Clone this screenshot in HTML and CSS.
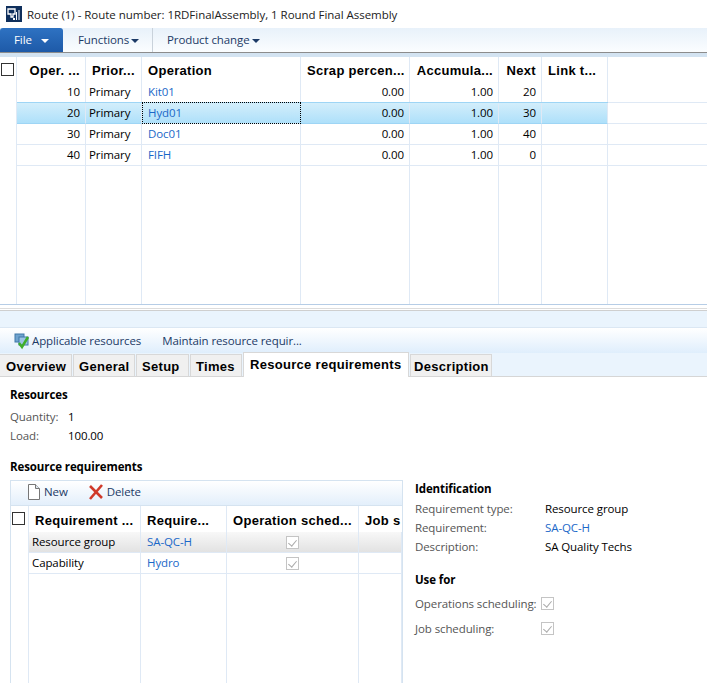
FILE: index.html
```html
<!DOCTYPE html>
<html lang="en">

<head>
    <meta charset="UTF-8">
    <title>Route (1)</title>
    <link rel="stylesheet" href="styles.css">
</head>

<body>
    <div class="titlebar">
        <svg class="app-icon" width="16" height="16" viewBox="0 0 16 16">
            <rect width="16" height="16" fill="#0f2f5c" />
            <path d="M2 3h7v5H7v3H5V8H2z" fill="none" stroke="#fff" stroke-width="1.3" />
            <path d="M10 6h1v8h-1zM12.500 4h1v10h-1zM7 12h2v2H7z" fill="#fff" />
        </svg>
        <span>Route (1) - Route number: 1RDFinalAssembly, 1 Round Final Assembly</span>
    </div>

    <div class="ribbon">
        <div class="file-tab">File <i class="caret white"></i></div>
        <div class="menu first">Functions<i class="caret"></i></div>
        <div class="menu">Product change<i class="caret"></i></div>
    </div>
    <div class="ribbon-edge"></div>

    <div class="route-grid">
        <div class="route-row head">
            <div class="cell"><span class="check"></span></div>
            <div class="cell num">Oper. ...</div>
            <div class="cell">Prior...</div>
            <div class="cell">Operation</div>
            <div class="cell num">Scrap percen...</div>
            <div class="cell num">Accumula...</div>
            <div class="cell num">Next</div>
            <div class="cell">Link t...</div>
        </div>
        <div class="route-row line">
            <div class="cell"></div>
            <div class="cell num">10</div>
            <div class="cell prio">Primary</div>
            <div class="cell link">Kit01</div>
            <div class="cell num">0.00</div>
            <div class="cell num">1.00</div>
            <div class="cell num">20</div>
            <div class="cell"></div>
        </div>
        <div class="route-row line selected">
            <div class="cell"></div>
            <div class="cell num">20</div>
            <div class="cell prio">Primary</div>
            <div class="cell link focus">Hyd01</div>
            <div class="cell num">0.00</div>
            <div class="cell num">1.00</div>
            <div class="cell num">30</div>
            <div class="cell"></div>
        </div>
        <div class="route-row line">
            <div class="cell"></div>
            <div class="cell num">30</div>
            <div class="cell prio">Primary</div>
            <div class="cell link">Doc01</div>
            <div class="cell num">0.00</div>
            <div class="cell num">1.00</div>
            <div class="cell num">40</div>
            <div class="cell"></div>
        </div>
        <div class="route-row line">
            <div class="cell"></div>
            <div class="cell num">40</div>
            <div class="cell prio">Primary</div>
            <div class="cell link">FIFH</div>
            <div class="cell num">0.00</div>
            <div class="cell num">1.00</div>
            <div class="cell num">0</div>
            <div class="cell"></div>
        </div>
        <div class="route-row filler">
            <div class="cell"></div>
            <div class="cell"></div>
            <div class="cell"></div>
            <div class="cell"></div>
            <div class="cell"></div>
            <div class="cell"></div>
            <div class="cell"></div>
            <div class="cell"></div>
        </div>
    </div>

    <div class="splitter"></div>
    <div class="pale-band"></div>

    <div class="action-bar">
        <svg width="18" height="18" viewBox="0 0 18 18">
            <rect x="1" y="2" width="9" height="8" fill="#6fa3cf" stroke="#3f78a8" />
            <rect x="5" y="5" width="9" height="8" fill="#9cc4e4" stroke="#3f78a8" />
            <path d="M5 11l3 4 6-10" fill="none" stroke="#3fae2a" stroke-width="2.500" />
        </svg>
        <span class="action first">Applicable resources</span>
        <span class="action">Maintain resource requir...</span>
    </div>

    <div class="tabs">
        <div class="tab">Overview</div>
        <div class="tab">General</div>
        <div class="tab">Setup</div>
        <div class="tab">Times</div>
        <div class="tab active">Resource requirements</div>
        <div class="tab">Description</div>
    </div>

    <div class="page">
        <h4 class="res-title">Resources</h4>
        <div class="field qty"><span class="label">Quantity:</span><span>1</span></div>
        <div class="field qty"><span class="label">Load:</span><span>100.00</span></div>

        <div class="columns">
            <div class="left">
                <h4>Resource requirements</h4>
                <div class="req-box">
                    <div class="req-toolbar">
                        <svg width="14" height="16" viewBox="0 0 14 16">
                            <path d="M1.500 .5h7l4 4v11h-11z" fill="#fff" stroke="#777" />
                            <path d="M8.500 .5v4h4" fill="#dde6ee" stroke="#777" />
                        </svg>
                        <span class="tool">New</span>
                        <svg class="del" width="16" height="16" viewBox="0 0 16 16">
                            <path d="M2 2l12 12M14 1L2 15" fill="none" stroke="#d03a2a" stroke-width="2.600" />
                        </svg>
                        <span class="tool">Delete</span>
                    </div>
                    <div class="req-row head">
                        <div class="cell"><span class="check"></span></div>
                        <div class="cell">Requirement ...</div>
                        <div class="cell">Require...</div>
                        <div class="cell">Operation sched...</div>
                        <div class="cell clip">Job s</div>
                    </div>
                    <div class="req-row line current">
                        <div class="cell"></div>
                        <div class="cell">Resource group</div>
                        <div class="cell link">SA-QC-H</div>
                        <div class="cell mid"><span class="tick"></span></div>
                        <div class="cell"></div>
                    </div>
                    <div class="req-row line">
                        <div class="cell"></div>
                        <div class="cell">Capability</div>
                        <div class="cell link">Hydro</div>
                        <div class="cell mid"><span class="tick"></span></div>
                        <div class="cell"></div>
                    </div>
                    <div class="req-row filler">
                        <div class="cell"></div>
                        <div class="cell"></div>
                        <div class="cell"></div>
                        <div class="cell"></div>
                        <div class="cell"></div>
                    </div>
                </div>
            </div>
            <div class="right">
                <h4>Identification</h4>
                <div class="field info"><span class="label">Requirement type:</span><span>Resource group</span></div>
                <div class="field info"><span class="label">Requirement:</span><span class="link">SA-QC-H</span></div>
                <div class="field info"><span class="label">Description:</span><span>SA Quality Techs</span></div>
                <h4 class="use-for">Use for</h4>
                <div class="field use"><span class="label">Operations scheduling:</span><span class="tick"></span></div>
                <div class="field use"><span class="label">Job scheduling:</span><span class="tick"></span></div>
            </div>
        </div>
    </div>
</body>

</html>
```

FILE: styles.css
```css
* {
    margin: 0;
    padding: 0;
    box-sizing: border-box;
}

body {
    width: 707px;
    height: 683px;
    overflow: hidden;
    background-color: #fff;
    color: #000;
    font-family: "Open Sans", "Liberation Sans", sans-serif;
    font-size: 11.5px;
    letter-spacing: -0.1px;
}

.titlebar {
    height: 28px;
    display: flex;
    align-items: center;
    gap: 5px;
    padding: 0 0 0 6px;
    color: #222;
    letter-spacing: -0.03px;
}

.ribbon {
    height: 25px;
    display: flex;
    align-items: center;
    background: linear-gradient(#e8f1fa, #fbfdff);
    border-bottom: 1px solid #8c8c8c;
    color: #1c3a66;
}

.file-tab {
    width: 63px;
    height: 24px;
    padding: 4px 0 0 14px;
    color: #fff;
    border-radius: 3px 3px 0 0;
    background: linear-gradient(#2e72c2, #1e5aa8);
}

.caret {
    display: inline-block;
    vertical-align: middle;
    margin-left: 2px;
    border-top: 4px solid #1c3a66;
    border-left: 4px solid transparent;
    border-right: 4px solid transparent;
}

.caret.white {
    margin-left: 6px;
    border-top-color: #fff;
}

.menu {
    height: 24px;
    line-height: 23px;
    padding: 0 14px;
    white-space: nowrap;
}

.menu.first {
    padding-left: 15px;
    width: 90px;
    border-right: 1px solid #c9d2db;
}

.ribbon-edge {
    height: 4px;
    background-color: #d3e3f1;
}

/* upper grid */
.route-grid {
    height: 248px;
    display: flex;
    flex-direction: column;
    border-bottom: 1px solid #b6cde6;
}

.route-row {
    display: grid;
    grid-template-columns: 17px 69px 56px 159px 109px 89px 43px 66px 1fr;
}

.route-row.head {
    height: 25px;
}

.route-row.line {
    height: 21px;
}

/* row line carries on past the last column */
.route-row.line::after {
    content: "";
    border-bottom: 1px solid #dfe9f5;
}

.route-row.filler {
    flex: 1;
}

.cell {
    padding: 0 5px 0 6px;
    border-right: 1px solid #dfe9f5;
    white-space: nowrap;
    overflow: hidden;
    line-height: 20px;
}

.line .cell:not(:first-child) {
    border-bottom: 1px solid #dfe9f5;
}

.head .cell {
    font-family: "Liberation Sans", sans-serif;
    font-size: 13px;
    font-weight: bold;
    letter-spacing: 0.3px;
    line-height: 28px;
}

.head .cell:first-child {
    padding: 6px 0 0 1px;
    line-height: 0;
}

.check {
    display: inline-block;
    width: 13px;
    height: 13px;
    border: 1px solid #333;
    background-color: #fff;
}

.num {
    text-align: right;
}

.cell.prio {
    padding-left: 3px;
}

.link {
    color: #1a68c8;
}

.selected .cell:not(:first-child) {
    background: linear-gradient(#d3eefb, #aee0fa);
    border-bottom-color: #9ed5f5;
    box-shadow: 0 -1px 0 #9ed5f5;
}

.selected .cell.focus {
    border: 1px dotted #000;
    margin: -1px 0 0;
    padding-left: 5px;
    line-height: 20px;
    box-shadow: none;
}

.splitter {
    height: 6px;
    border-bottom: 1px solid #cfcfcf;
}

.splitter::before {
    content: "";
    display: block;
    height: 3px;
    border-bottom: 1px solid #dcdcdc;
}

.pale-band {
    height: 17px;
    background-color: #eaf4fd;
    border-bottom: 1px solid #dbe7f3;
}

.action-bar {
    height: 25px;
    display: flex;
    align-items: center;
    padding-left: 14px;
    background: linear-gradient(#fff, #dfeefc);
    color: #1c3a66;
}

.action.first {
    margin-left: 0;
}

.action {
    margin-left: 21px;
}

.tabs {
    height: 24px;
    display: flex;
    align-items: flex-end;
    gap: 1px;
    background-color: #eaf4fd;
    border-bottom: 1px solid #d6d6d6;
    font-family: "Liberation Sans", sans-serif;
    font-size: 13px;
    font-weight: bold;
    letter-spacing: 0.3px;
}

.tab {
    height: 22px;
    padding: 4px 0 0 5px;
    background-color: #f0f0f0;
    border: 1px solid #d8d8d8;
    border-bottom: none;
    white-space: nowrap;
}

.tab:nth-child(1) { width: 72px; border-left: none; padding-left: 6px; }
.tab:nth-child(2) { width: 62px; }
.tab:nth-child(3) { width: 53px; }
.tab:nth-child(4) { width: 52px; }
.tab:nth-child(5) { width: 166px; }
.tab:nth-child(6) { width: 82px; padding-left: 3px; }

.tab.active {
    height: 25px;
    margin-bottom: -1px;
    padding: 4px 0 0 6px;
    background-color: #fff;
    border-bottom: none;
}

/* tab page */
.page {
    padding: 10px 0 0 10px;
}

h4 {
    font-size: 11.5px;
    font-weight: 700;
    height: 16px;
    line-height: 16px;
}

.field {
    display: flex;
    align-items: center;
    height: 19px;
}

.label {
    color: #555;
}

.qty .label {
    width: 58px;
}

.res-title {
    margin-bottom: 4px;
}

.columns {
    display: flex;
    margin-top: 14px;
}

.left {
    width: 393px;
}

.req-box {
    height: 210px;
    margin-top: 5px;
    display: flex;
    flex-direction: column;
    border: 1px solid #d5e3f0;
}

.req-toolbar {
    height: 25px;
    flex: none;
    display: flex;
    align-items: center;
    padding: 0 0 3px 16px;
    background: linear-gradient(#fff, #e3effb);
    border-bottom: 1px solid #d5e3f0;
    color: #1c3a66;
}

.tool {
    margin-left: 3px;
}

.del {
    margin-left: 20px;
}

.req-row {
    display: grid;
    flex: none;
    grid-template-columns: 18px 112px 86px 132px 43px;
}

.req-row.head {
    height: 26px;
}

.req-row.head .cell {
    line-height: 29px;
}

.req-row.head .cell:first-child {
    padding-top: 6px;
    line-height: 0;
}

.req-row.line {
    height: 21px;
}

.req-row.filler {
    flex: 1;
}

.req-row.line .cell:nth-child(2) {
    padding-left: 3px;
}

.req-row .clip {
    padding-right: 0;
    border-right: none;
}

.req-row.current .cell:not(:first-child) {
    background: linear-gradient(#f8f8f8, #e2e2e2);
}

.cell.mid {
    display: flex;
    align-items: center;
    justify-content: center;
    padding: 0;
}

.tick {
    display: inline-block;
    position: relative;
    width: 13px;
    height: 13px;
    border: 1px solid #c4c4c4;
    background-color: #fff;
}

.tick::after {
    content: "";
    position: absolute;
    left: 3px;
    top: 1px;
    width: 4px;
    height: 7px;
    border-right: 1px solid #aaa;
    border-bottom: 1px solid #aaa;
    transform: rotate(40deg);
}

.right {
    padding: 0 0 0 12px;
    margin-top: 22px;
}

.right h4:first-child {
    margin-bottom: 2px;
}

.info .label {
    width: 130px;
}

.use-for {
    margin-top: 16px;
    margin-bottom: 3px;
}

.use {
    height: 25px;
}

.use .label {
    width: 126px;
}
```
